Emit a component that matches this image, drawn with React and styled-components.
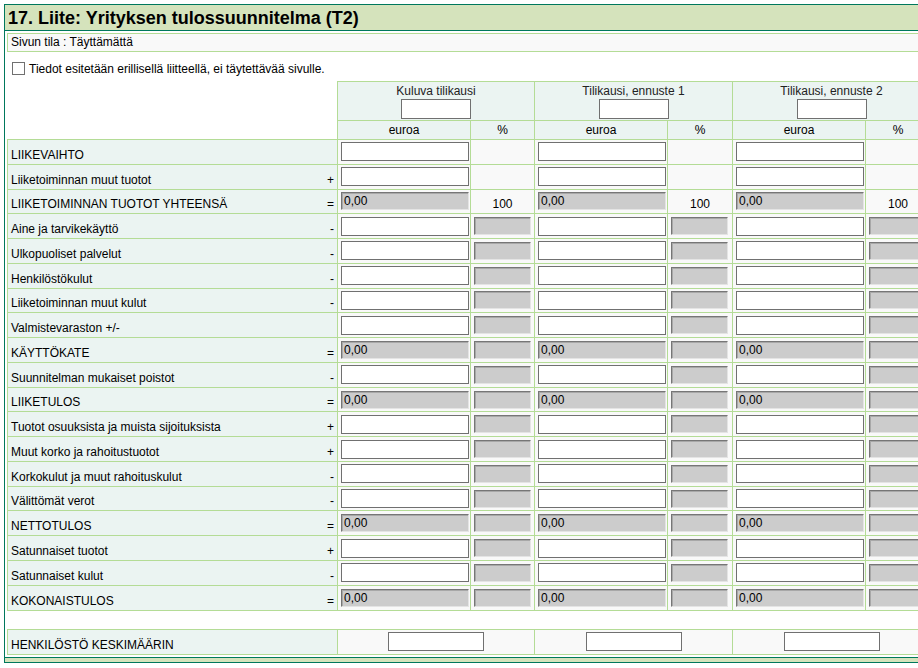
import React from 'react';
import styled, { createGlobalStyle } from 'styled-components';

const DARK = '#00785c';
const LIGHT = '#b4dc96';
const HEADBG = '#d5e3bc';
const LABELBG = '#ebf4f2';
const CELLBG = '#f9f9f9';

const Global = createGlobalStyle`
  html, body { margin: 0; padding: 0; overflow: hidden; background: #fff; }
  body {
    font-family: Arial, "Liberation Sans", sans-serif;
    font-size: 12px;
    color: #000;
  }
`;

const Page = styled.div`
  padding: 4px 0 0 4px;
  width: 960px;
`;

const Panel = styled.div`
  border-left: 1px solid ${DARK};
  border-top: 1px solid ${DARK};
`;

const TitleBar = styled.div`
  height: 25px;
  background: ${HEADBG};
  border-bottom: 1px solid ${DARK};
  display: flex;
  align-items: center;
  padding-left: 3px;
`;

const Title = styled.h1`
  margin: 0;
  font-size: 18px;
  font-weight: bold;
  line-height: 21px;
  padding-top: 1px;
`;

const Content = styled.div`
  padding: 2px 0 0 2px;
`;

const StatusBox = styled.div`
  height: 17px;
  line-height: 17px;
  border: 1px solid ${LIGHT};
  background: ${CELLBG};
  padding-left: 3px;
`;

const CheckRow = styled.label`
  display: flex;
  align-items: flex-end;
  gap: 4px;
  height: 23px;
  padding: 0 0 0 5px;
  box-sizing: border-box;
  margin-top: 0;
  height: 29px;
  padding-bottom: 6px;
`;

const Check = styled.input`
  appearance: none;
  width: 13px;
  height: 13px;
  margin: 0;
  border: 1px solid #707070;
  background: #fff;
  box-sizing: border-box;
`;

const CheckText = styled.span`
  line-height: 14px;
  margin-bottom: -1px;
`;

const Table = styled.table`
  border-collapse: collapse;
  table-layout: fixed;
  width: 923px;
`;

const HeadRow = styled.tr`
  height: ${(p) => p.$h}px;
`;

const DataRow = styled.tr`
  height: 24.78px;
`;

const SpacerRow = styled.tr`
  height: 19px;
`;

const BlankCell = styled.td`
  border: none;
  background: #fff;
  padding: 0;
`;

const GroupHead = styled.td`
  border: 1px solid ${LIGHT};
  background: ${LABELBG};
  text-align: center;
  vertical-align: top;
  padding: 2px 0 0;
  color: #222;
  line-height: 14px;
`;

const SubHead = styled.td`
  border: 1px solid ${LIGHT};
  background: ${LABELBG};
  text-align: center;
  vertical-align: middle;
  padding: 0;
  line-height: 14px;
`;

const LabelCell = styled.td`
  border: 1px solid ${LIGHT};
  background: ${LABELBG};
  padding: 0 3px 2px;
  vertical-align: bottom;
  line-height: 14px;
`;

const LabelInner = styled.div`
  display: flex;
  justify-content: space-between;
  align-items: flex-end;
`;

const Sign = styled.span`
  padding-right: 0;
`;

const InputCell = styled.td`
  border: 1px solid ${LIGHT};
  background: ${CELLBG};
  padding: 0 3px;
  vertical-align: middle;
  text-align: ${(p) => (p.$center ? 'center' : 'left')};
`;

const PctText = styled.td`
  border: 1px solid ${LIGHT};
  background: ${CELLBG};
  padding: 0 0 2px;
  text-align: center;
  vertical-align: bottom;
  line-height: 14px;
`;

const TextInput = styled.input`
  display: block;
  box-sizing: border-box;
  width: ${(p) => p.$w}px;
  height: ${(p) => p.$h || 19}px;
  margin: ${(p) => (p.$center ? '0 auto' : '0')};
  border: 1px solid #707070;
  background: #fff;
  padding: 0 2px;
  font: 12px Arial, "Liberation Sans", sans-serif;
`;

const GrayField = styled.div`
  box-sizing: border-box;
  width: ${(p) => p.$w}px;
  height: 18px;
  background: #cccccc;
  border-style: solid;
  border-width: 1px;
  border-color: #767676 #e4e4e4 #e4e4e4 #767676;
  box-shadow: inset 1px 1px 0 #a8a8a8;
  padding: 1px 0 0 2px;
  line-height: 14px;
  font-size: 12px;
  color: #000;
`;

const HeadInput = styled(TextInput)`
  margin: 1px auto 0;
`;

const Footer = styled.div`
  margin-top: 2px;
  height: 4px;
  background: ${HEADBG};
  border-top: 1px solid ${DARK};
  border-bottom: 1px solid ${DARK};
`;

const periods = ['Kuluva tilikausi', 'Tilikausi, ennuste 1', 'Tilikausi, ennuste 2'];

const rows = [
  { label: 'LIIKEVAIHTO', sign: '', sum: false, pct: 'none' },
  { label: 'Liiketoiminnan muut tuotot', sign: '+', sum: false, pct: 'none' },
  { label: 'LIIKETOIMINNAN TUOTOT YHTEENSÄ', sign: '=', sum: true, pct: 'hundred' },
  { label: 'Aine ja tarvikekäyttö', sign: '-', sum: false, pct: 'gray' },
  { label: 'Ulkopuoliset palvelut', sign: '-', sum: false, pct: 'gray' },
  { label: 'Henkilöstökulut', sign: '-', sum: false, pct: 'gray' },
  { label: 'Liiketoiminnan muut kulut', sign: '-', sum: false, pct: 'gray' },
  { label: 'Valmistevaraston +/-', sign: '', sum: false, pct: 'gray' },
  { label: 'KÄYTTÖKATE', sign: '=', sum: true, pct: 'gray' },
  { label: 'Suunnitelman mukaiset poistot', sign: '-', sum: false, pct: 'gray' },
  { label: 'LIIKETULOS', sign: '=', sum: true, pct: 'gray' },
  { label: 'Tuotot osuuksista ja muista sijoituksista', sign: '+', sum: false, pct: 'gray' },
  { label: 'Muut korko ja rahoitustuotot', sign: '+', sum: false, pct: 'gray' },
  { label: 'Korkokulut ja muut rahoituskulut', sign: '-', sum: false, pct: 'gray' },
  { label: 'Välittömät verot', sign: '-', sum: false, pct: 'gray' },
  { label: 'NETTOTULOS', sign: '=', sum: true, pct: 'gray' },
  { label: 'Satunnaiset tuotot', sign: '+', sum: false, pct: 'gray' },
  { label: 'Satunnaiset kulut', sign: '-', sum: false, pct: 'gray' },
  { label: 'KOKONAISTULOS', sign: '=', sum: true, pct: 'gray' },
];

function PctCell({ kind }) {
  if (kind === 'hundred') return <PctText>100</PctText>;
  if (kind === 'gray')
    return (
      <InputCell>
        <GrayField $w={57} />
      </InputCell>
    );
  return <InputCell />;
}

export default function App() {
  return (
    <Page>
      <Global />
      <Panel>
        <TitleBar>
          <Title>17. Liite: Yrityksen tulossuunnitelma (T2)</Title>
        </TitleBar>
        <Content>
          <StatusBox>Sivun tila : Täyttämättä</StatusBox>
          <CheckRow>
            <Check type="checkbox" />
            <CheckText>Tiedot esitetään erillisellä liitteellä, ei täytettävää sivulle.</CheckText>
          </CheckRow>
          <Table>
            <colgroup>
              <col style={{ width: 330 }} />
              <col style={{ width: 133 }} />
              <col style={{ width: 64 }} />
              <col style={{ width: 133 }} />
              <col style={{ width: 65 }} />
              <col style={{ width: 133 }} />
              <col style={{ width: 65 }} />
            </colgroup>
            <tbody>
              <HeadRow $h={39}>
                <BlankCell />
                {periods.map((p) => (
                  <GroupHead key={p} colSpan={2}>
                    {p}
                    <HeadInput $w={70} $h={20} />
                  </GroupHead>
                ))}
              </HeadRow>
              <HeadRow $h={19}>
                <BlankCell />
                {periods.map((p) => (
                  <React.Fragment key={p}>
                    <SubHead>euroa</SubHead>
                    <SubHead>%</SubHead>
                  </React.Fragment>
                ))}
              </HeadRow>
              {rows.map((r) => (
                <DataRow key={r.label}>
                  <LabelCell>
                    <LabelInner>
                      <span>{r.label}</span>
                      <Sign>{r.sign}</Sign>
                    </LabelInner>
                  </LabelCell>
                  {periods.map((p) => (
                    <React.Fragment key={p}>
                      <InputCell>
                        {r.sum ? <GrayField $w={128}>0,00</GrayField> : <TextInput $w={128} />}
                      </InputCell>
                      <PctCell kind={r.pct} />
                    </React.Fragment>
                  ))}
                </DataRow>
              ))}
              <SpacerRow>
                <BlankCell colSpan={7} />
              </SpacerRow>
              <HeadRow $h={25}>
                <LabelCell>HENKILÖSTÖ KESKIMÄÄRIN</LabelCell>
                {periods.map((p) => (
                  <InputCell key={p} colSpan={2} $center>
                    <TextInput $w={96} $center />
                  </InputCell>
                ))}
              </HeadRow>
            </tbody>
          </Table>
        </Content>
        <Footer />
      </Panel>
    </Page>
  );
}
